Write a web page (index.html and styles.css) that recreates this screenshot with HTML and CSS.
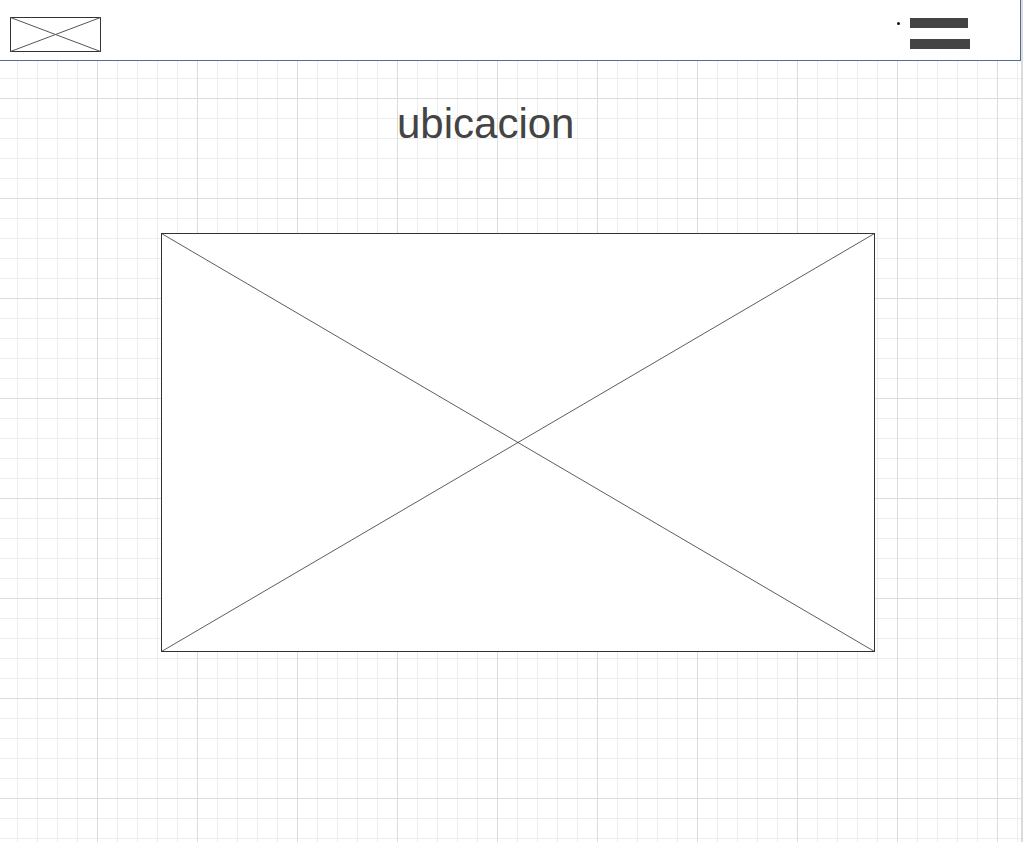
FILE: index.html
```html
<!DOCTYPE html>
<html lang="es">
<head>
    <meta charset="UTF-8">
    <meta name="viewport" content="width=device-width, initial-scale=1.0">
    <title>Ubicacion</title>
    <link rel="stylesheet" href="styles.css">
</head>
<body>
    <div class="page">
        <header class="topbar">
            <div class="logo">
                <svg width="91" height="35" viewBox="0 0 91 35">
                    <rect x="0.5" y="0.5" width="90" height="34" fill="#fff" stroke="#333"/>
                    <line x1="0.5" y1="0.5" x2="90.5" y2="34.5" stroke="#555"/>
                    <line x1="0.5" y1="34.5" x2="90.5" y2="0.5" stroke="#555"/>
                </svg>
            </div>
            <ul class="menu">
                <li class="menu-item">
                    <span class="bar bar-top"></span>
                    <span class="bar bar-bottom"></span>
                </li>
            </ul>
        </header>

        <main class="content">
            <h1 class="title">ubicacion</h1>
            <div class="map">
                <svg width="714" height="419" viewBox="0 0 714 419">
                    <rect x="0.5" y="0.5" width="713" height="418" fill="#fff" stroke="#333"/>
                    <line x1="0.5" y1="0.5" x2="713.5" y2="418.5" stroke="#333" stroke-width="0.8"/>
                    <line x1="0.5" y1="418.5" x2="713.5" y2="0.5" stroke="#333" stroke-width="0.8"/>
                </svg>
            </div>
        </main>
    </div>
</body>
</html>
```

FILE: styles.css
```css
html {
    background-color: #dcdcdc;
}

body {
    margin: 0;
    font-family: 'Liberation Sans', Arial, sans-serif;
    color: #444;
}

.page {
    width: 1021px;
    height: 842px;
    overflow: hidden;
    background-color: #fff;
    background-image:
        linear-gradient(to right, #dcdcdc 1px, transparent 1px),
        linear-gradient(to bottom, #dcdcdc 1px, transparent 1px),
        linear-gradient(to right, #ededed 1px, transparent 1px),
        linear-gradient(to bottom, #ededed 1px, transparent 1px);
    background-size: 100px 100px, 100px 100px, 20px 20px, 20px 20px;
    background-position: 97px 98px, 97px 98px, 17px 18px, 17px 18px;
}

.topbar {
    box-sizing: border-box;
    height: 61px;
    display: flex;
    align-items: flex-start;
    justify-content: space-between;
    background-color: #fff;
    border-bottom: 1px solid #4f6c9c;
    border-right: 1px solid #4f6c9c;
}

.logo {
    margin: 17px 0 0 10px;
    line-height: 0;
}

.menu {
    list-style: none;
    margin: 18px 50px 0 0;
    padding: 0;
}

.menu-item {
    position: relative;
    display: flex;
    flex-direction: column;
    gap: 11px;
}

.menu-item::before {
    content: "";
    position: absolute;
    left: -13px;
    top: 4px;
    width: 3px;
    height: 3px;
    border-radius: 50%;
    background-color: #111;
}

.bar {
    display: block;
    height: 10px;
    background-color: #444;
}

.bar-top {
    width: 58px;
}

.bar-bottom {
    width: 60px;
}

.content {
    padding-top: 39px;
}

.title {
    margin: 0 0 85px 397px;
    font-size: 42px;
    font-weight: normal;
    line-height: 48px;
    color: #444;
}

.map {
    margin-left: 161px;
    line-height: 0;
}
```
